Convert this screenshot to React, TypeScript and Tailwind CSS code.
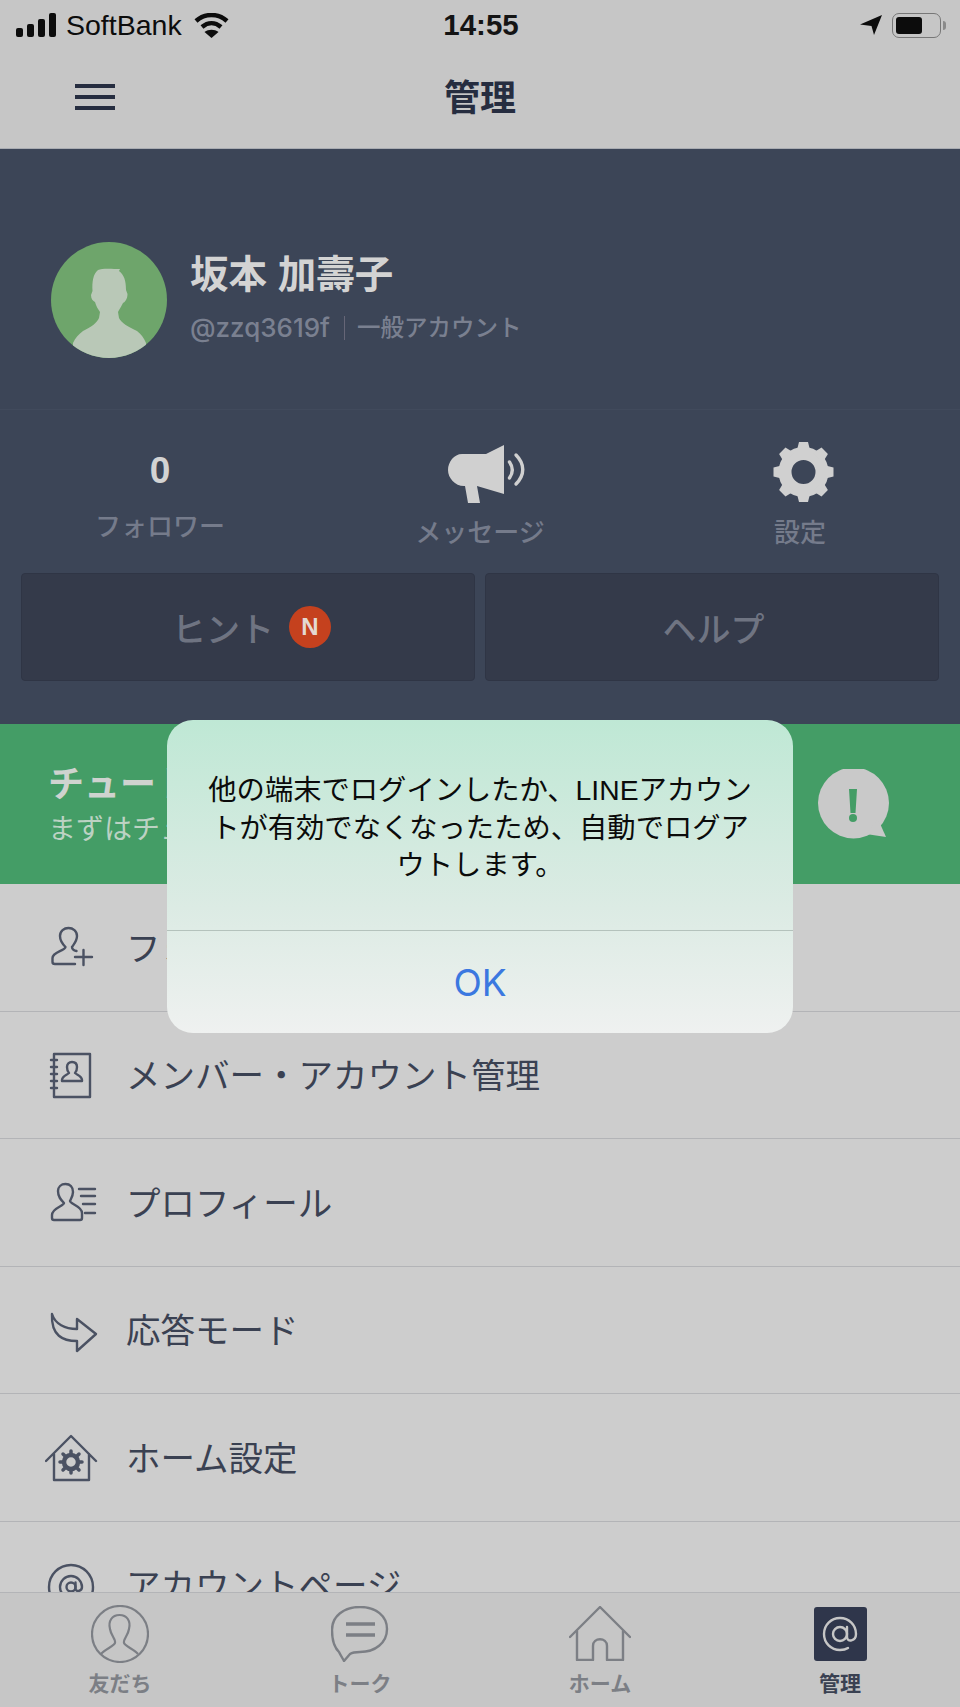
const rows = [
  { label: "フォロワーを増やす", icon: "add" },
  { label: "メンバー・アカウント管理", icon: "book" },
  { label: "プロフィール", icon: "profile" },
  { label: "応答モード", icon: "reply" },
  { label: "ホーム設定", icon: "home" },
  { label: "アカウントページ", icon: "at" },
];

function RowIcon({ name }: { name: string }) {
  return (
    <svg width="56" height="56" viewBox="0 0 56 56" fill="none" stroke="#4b5263" strokeWidth="2.4" strokeLinecap="round" strokeLinejoin="round">
      {name === "add" && (
        <>
          <path d="M30 45H10c-2 0-2.500-1-2.500-2v-4c0-6 12-7 13-11-3-3-5.500-6-5.500-11 0-5 4-8 8.500-8s8.500 3 8.500 8c0 5-3 8-5 11 0 2 2 3.500 4.500 4" />
          <path d="M38.500 31v15M30 38h17" />
        </>
      )}
      {name === "book" && (
        <>
          <rect x="9" y="7" width="36" height="43" />
          <path d="M6 13h6M6 20h6M6 27h6M6 34h6M6 41h6" />
          <path d="M27 15c3 0 5 2 5 5 0 3-1 5-2 6 2 2 7 3 7 7v1H17v-1c0-4 5-5 7-7-1-1-2-3-2-6 0-3 2-5 5-5z" />
        </>
      )}
      {name === "profile" && (
        <>
          <path d="M20.500 10C25 10 28 13 28 18c0 4-2 7-3 9 0 3 12 5 12 12v5c0 2-1 2-2 2H9c-1 0-2 0-2-2v-3c0-7 12-9 12-12-3-3-6-6-6-12 0-4 3-7 7.500-7z" />
          <path d="M34 15h16M36 22h14M38 30h12M40 39h10" />
        </>
      )}
      {name === "reply" && (
        <path d="M7 12c3 10 13 15 25 15V17l19 15-19 17V39C18 39 6 34 7 12z" />
      )}
      {name === "home" && (
        <>
          <path d="M1 32 26 7l25 25M9 25v26h35V25" />
          <circle cx="26" cy="33" r="7" strokeWidth="4.5" />
          <path d="M26 22v3M26 41v3M15 33h3M34 33h3M18 25l2 2M32 39l2 2M18 41l2-2M32 27l2-2" strokeWidth="3.5" />
        </>
      )}
      {name === "at" && (
        <>
          <circle cx="26" cy="30" r="22" />
          <circle cx="26" cy="30" r="4.500" />
          <path d="M30.500 25.500v6c0 4 6.500 3 6.500-1.500 0-6-5-11-11-11s-11 5-11 11 5 11 11 11c2 0 4 0 5.500-1.500" />
        </>
      )}
    </svg>
  );
}

function Gear() {
  return (
    <svg width="61" height="60" viewBox="0 0 60 60" fill="#d0d0d0">
      <circle cx="30" cy="30" r="18.5" fill="none" stroke="#d0d0d0" strokeWidth="13" />
      <polygon points="23,10 25.5,0 34.5,0 37,10" transform="rotate(0 30 30)" />
      <polygon points="23,10 25.5,0 34.5,0 37,10" transform="rotate(45 30 30)" />
      <polygon points="23,10 25.5,0 34.5,0 37,10" transform="rotate(90 30 30)" />
      <polygon points="23,10 25.5,0 34.5,0 37,10" transform="rotate(135 30 30)" />
      <polygon points="23,10 25.5,0 34.5,0 37,10" transform="rotate(180 30 30)" />
      <polygon points="23,10 25.5,0 34.5,0 37,10" transform="rotate(225 30 30)" />
      <polygon points="23,10 25.5,0 34.5,0 37,10" transform="rotate(270 30 30)" />
      <polygon points="23,10 25.5,0 34.5,0 37,10" transform="rotate(315 30 30)" />
    </svg>
  );
}

function Megaphone() {
  return (
    <svg className="ml-[13px]" width="77" height="58" viewBox="0 0 77 58" fill="none" strokeLinecap="round">
      <path d="M14 9h24L56 0v49l-27-8 3 17H20l-3-17h-1C7 41 0 33 0 25S6 9 14 9z" fill="#d0d0d0" />
      <path d="M61.500 17c3.500 5 3.500 11 0 16" stroke="#d0d0d0" strokeWidth="3.4" />
      <path d="M68 10c9 9 9 20 0 29" stroke="#d0d0d0" strokeWidth="3.4" />
    </svg>
  );
}

function StatusBar() {
  return (
    <div className="flex h-[50px] items-center justify-between pl-[16px] pr-[14px] text-[#0c0c0c]">
      <div className="flex w-[300px] items-center">
        <svg width="40" height="24" viewBox="0 0 40 24" fill="#0c0c0c">
          <rect x="0" y="15" width="7" height="9" rx="2" />
          <rect x="11" y="11" width="7" height="13" rx="2" />
          <rect x="22" y="6" width="7" height="18" rx="2" />
          <rect x="33" y="0" width="7" height="24" rx="2" />
        </svg>
        <span className="ml-[10px] text-[28.5px] leading-none">SoftBank</span>
        <svg className="ml-[12px]" width="35" height="25" viewBox="0 0 35 25" fill="none" stroke="#0c0c0c" strokeWidth="4.5">
          <path d="M2 8c9-8 22-8 31 0" />
          <path d="M8 14c6-5 13-5 19 0" />
          <path d="M17.500 25l-7-6c4-3 10-3 14 0z" fill="#0c0c0c" stroke="none" />
        </svg>
      </div>
      <span className="text-[29.5px] font-bold leading-none text-[#141414]">14:55</span>
      <div className="flex w-[300px] items-center justify-end gap-[10px]">
        <svg width="22" height="20" viewBox="0 0 22 20" fill="#0c0c0c">
          <path d="M22 0 14 20 11.5 11 0 9.5z" />
        </svg>
        <div className="flex items-center">
          <div className="flex h-[25px] w-[49px] items-center rounded-[7px] border-[1.5px] border-[#777777] p-[3px]">
            <div className="h-full w-[26px] rounded-[3px] bg-[#0c0c0c]" />
          </div>
          <div className="ml-[2px] h-[9px] w-[3px] rounded-r-full bg-[#8a8a8a]" />
        </div>
      </div>
    </div>
  );
}

function Tab({ label, active, children }: { label: string; active?: boolean; children: React.ReactNode }) {
  return (
    <div className="flex flex-col items-center">
      <div className="flex h-[57px] items-center justify-center">{children}</div>
      <span className={"mt-[7px] text-[21px] font-bold leading-[30px] " + (active ? "text-[#3a4152]" : "text-[#7c7f85]")}>
        {label}
      </span>
    </div>
  );
}

export default function App() {
  return (
    <div className="relative flex h-[1707px] w-[960px] flex-col overflow-hidden bg-[#cdcdcd] font-['Liberation_Sans','Noto_Sans_CJK_JP',sans-serif]">
      <header className="h-[149px] border-b border-[#a9acb2] bg-[#c6c6c6]">
        <StatusBar />
        <div className="relative flex h-[98px] items-center justify-center">
          <div className="absolute left-[75px] top-[34px] flex w-[40px] flex-col gap-[7px]">
            <div className="h-[4px] bg-[#262d40]" />
            <div className="h-[4px] bg-[#262d40]" />
            <div className="h-[4px] bg-[#262d40]" />
          </div>
          <h1 className="text-[36px] font-bold leading-none text-[#262d40]">管理</h1>
        </div>
      </header>

      <section className="h-[575px] bg-[#3c4557]">
        <div className="flex h-[261px] items-start gap-[23px] border-b border-[#414a5c] pl-[51px] pt-[93px]">
          <div className="h-[116px] w-[116px] overflow-hidden rounded-full bg-[#6ea56b]">
            <svg width="116" height="116" viewBox="0 0 116 116">
              <path
                d="M47 28c4-2 15-1 22-1l-1 2c5 4 7 9 7 19l1.500 4c0 5-2.500 8-4.500 9-2 4-4 7-5 9l1 6c2 5 10 9 18 13 4 3 7 7 9 12v15H22v-15c2-5 6-9 10-12 8-4 14-8 16-13l1-6c-2-3-4-6-5-10-2-1-4-3-4-7l1.500-4c-.5-9 .5-17 5.500-21z"
                fill="#b9c8b7"
              />
            </svg>
          </div>
          <div className="flex flex-col">
            <span className="mt-[7px] text-[38.5px] font-bold leading-[52px] text-[#d3d3d3]">坂本 加壽子</span>
            <div className="mt-[9px] flex items-center text-[#7a8090]">
              <span className="font-['Inter',sans-serif] text-[26px] font-medium leading-[36px]">@zzq3619f</span>
              <div className="ml-[14px] mr-[12px] h-[24px] w-[1px] bg-[#667]" />
              <span className="text-[23.5px] font-medium leading-[36px]">一般アカウント</span>
            </div>
          </div>
        </div>

        <div className="grid h-[163px] grid-cols-3">
          <div className="flex flex-col items-center pt-[34px]">
            <span className="text-[37px] font-bold leading-[54px] text-[#d3d3d3]">0</span>
            <span className="mt-[11px] text-[26px] font-medium leading-[36px] text-[#757b8b]">フォロワー</span>
          </div>
          <div className="flex flex-col items-center pt-[35px]">
            <Megaphone />
            <span className="mt-[12px] text-[26px] font-medium leading-[36px] text-[#757b8b]">メッセージ</span>
          </div>
          <div className="flex flex-col items-center pt-[32px]">
            <div className="ml-[6px]">
              <Gear />
            </div>
            <span className="mt-[13px] text-[26px] font-medium leading-[36px] text-[#757b8b]">設定</span>
          </div>
        </div>

        <div className="grid h-[108px] grid-cols-2 gap-[10px] px-[21px]">
          <div className="flex items-center justify-center gap-[15px] rounded-[4px] border border-[#2f3545] bg-[#343a4a] pl-[7px]">
            <span className="pt-[6px] text-[34px] font-medium leading-none text-[#6f7482]">ヒント</span>
            <div className="flex h-[42px] w-[42px] items-center justify-center rounded-full bg-[#c5411e] text-[24px] font-bold text-[#e4d8d2]">
              N
            </div>
          </div>
          <div className="flex items-center justify-center rounded-[4px] border border-[#2f3545] bg-[#343a4a] pl-[3px]">
            <span className="pt-[6px] text-[34px] font-medium leading-none text-[#6f7482]">ヘルプ</span>
          </div>
        </div>
      </section>

      <section className="flex h-[160px] shrink-0 items-center justify-between bg-[#449d66] pl-[48px] pr-[70px]">
        <div className="flex flex-col">
          <span className="text-[36px] font-bold leading-[48px] text-[#cfd3cf]">チュートリアル</span>
          <span className="mt-[3px] text-[28px] leading-[36px] text-[#bcd2c3]">まずはチュートリアルを</span>
        </div>
        <svg width="72" height="71" viewBox="0 0 72 71" fill="#c9c9c9">
          <circle cx="35.500" cy="34" r="35.500" />
          <path d="M60 50 68 68 48 65z" />
          <path d="M31 20h8l-1.500 24h-5z" fill="#449d66" />
          <circle cx="35" cy="49" r="4" fill="#449d66" />
        </svg>
      </section>

      <div className="min-h-0 flex-1 overflow-hidden">
        {rows.map((row) => (
          <div key={row.icon} className="flex h-[127.5px] items-center border-b border-[#b3b4b7] pl-[45px]">
            <RowIcon name={row.icon} />
            <span className="ml-[25px] pt-[3px] text-[34.5px] leading-none text-[#3a4152]">{row.label}</span>
          </div>
        ))}
      </div>

      <nav className="grid h-[115px] shrink-0 grid-cols-4 border-t border-[#b3b4b7] bg-[#c6c6c6] pt-[12px]">
        <Tab label="友だち">
          <svg width="58" height="58" viewBox="0 0 58 58" fill="none" stroke="#7c7f85" strokeWidth="2.2" strokeLinejoin="round">
            <circle cx="29" cy="29" r="28" />
            <path d="M10 49c4-5 12-7 14-11 1-4-4-7-5-14-2-8 2-14 9.500-14S40 16 38 24c-1 7-6 10-5 14 2 4 10 6 14 11" />
          </svg>
        </Tab>
        <Tab label="トーク">
          <svg width="58" height="56" viewBox="0 0 58 56" fill="none" stroke="#7c7f85" strokeWidth="2.4" strokeLinejoin="round">
            <path d="M29 1c16 0 27 9 27 22 0 14-12 23-27 23-3 0-7 0-10 2l-6 7c-1-2-3-5-5-9C3 41 1 33 1 24 1 10 13 1 29 1z" />
            <path d="M15 18h29M15 29h29" strokeWidth="3.4" />
          </svg>
        </Tab>
        <Tab label="ホーム">
          <svg width="62" height="55" viewBox="0 0 62 55" fill="none" stroke="#7c7f85" strokeWidth="2.4" strokeLinecap="round" strokeLinejoin="round">
            <path d="M1 31 31 1l30 30" />
            <path d="M8 25v29h16V40c0-9 14-9 14 0v14h16V25" />
          </svg>
        </Tab>
        <Tab label="管理" active>
          <div className="flex h-[54px] w-[53px] items-center justify-center rounded-[3px] bg-[#2f364b]">
            <svg width="36" height="36" viewBox="0 0 36 36" fill="none" stroke="#c6c6c6" strokeWidth="2.4" strokeLinecap="round">
              <circle cx="18" cy="18" r="7" />
              <path d="M25 11v10c0 6 9 4 9-3C34 9 27 2 18 2S2 9 2 18s7 16 16 16c3 0 5 0 8-2" />
            </svg>
          </div>
        </Tab>
      </nav>

      <div className="absolute left-[167px] top-[720px] flex h-[313px] w-[626px] flex-col rounded-[26px] bg-gradient-to-b from-[#bfe8d5] via-[#dcebe4] via-60% to-[#eff1f0]">
        <div className="flex h-[211px] items-start justify-center border-b border-[#b4c2bc] pt-[52px]">
          <p className="w-[550px] text-center text-[28.3px] leading-[37.5px] text-[#0b0b0b]">
            他の端末でログインしたか、LINEアカウントが有効でなくなったため、自動でログアウトします。
          </p>
        </div>
        <div className="flex flex-1 items-center justify-center">
          <span className="font-['Inter',sans-serif] text-[37px] leading-none text-[#3b78e0]">OK</span>
        </div>
      </div>
    </div>
  );
}
